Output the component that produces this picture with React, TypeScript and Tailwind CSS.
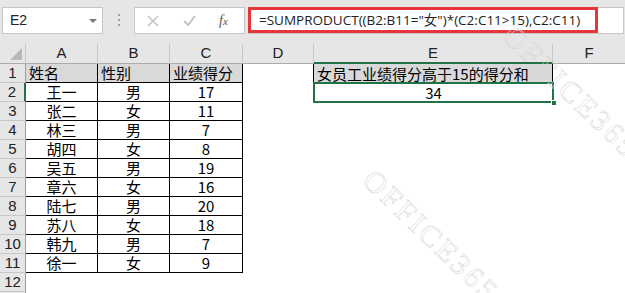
import React from "react";

const CJK = "font-['Noto_Sans_CJK_SC',_'Noto_Sans',_sans-serif]";

const data: [string, string, string][] = [
  ["王一", "男", "17"],
  ["张二", "女", "11"],
  ["林三", "男", "7"],
  ["胡四", "女", "8"],
  ["吴五", "男", "19"],
  ["章六", "女", "16"],
  ["陆七", "男", "20"],
  ["苏八", "女", "18"],
  ["韩九", "男", "7"],
  ["徐一", "女", "9"],
];

function RowHead({ n, active }: { n?: number; active?: boolean }) {
  return (
    <div
      className={`h-[19px] bg-[#e6e6e6] border-b border-b-[#c8c8c8] flex items-center justify-center text-[15px] leading-[18px] text-[#222] font-['Liberation_Sans',_sans-serif] ${
        active ? "border-r-2 border-r-[#217346]" : "border-r border-r-[#9e9e9e]"
      }`}
    >
      {n}
    </div>
  );
}

function ColHead({ label, active, last }: { label: string; active?: boolean; last?: boolean }) {
  return (
    <div
      className={`h-[20px] bg-[#e6e6e6] flex items-center justify-center text-[15px] text-[#222] font-['Liberation_Sans',_sans-serif] ${
        last ? "" : "border-r border-r-[#c8c8c8]"
      } ${active ? "border-b-2 border-b-[#217346]" : "border-b border-b-[#ababab]"}`}
    >
      {label}
    </div>
  );
}

function Cell({
  children,
  className = "",
}: {
  children?: React.ReactNode;
  className?: string;
}) {
  return (
    <div className={`h-[19px] flex items-center text-[15px] leading-[18px] text-black ${CJK} ${className}`}>
      {children}
    </div>
  );
}

const wm =
  "absolute origin-[0_50%] rotate-[44deg] text-[30px] leading-[30px] tracking-[3px] whitespace-nowrap text-transparent font-['Liberation_Serif',_serif] [-webkit-text-stroke:0.5px_#d4d4d4]";

export default function App() {
  return (
    <div className="relative w-[625px] h-[293px] overflow-hidden bg-white">
      {/* Top bar */}
      <div className="h-[44px] bg-[#e6e6e6] flex items-start pt-[7px] pl-[2px]">
        <div className="w-[101px] h-[27px] bg-white border border-[#c6c6c6] flex items-center justify-between pl-[7px] pr-[5px]">
          <span className="text-[14px] text-[#222] font-['Liberation_Sans',_sans-serif]">E2</span>
          <span className="w-0 h-0 border-l-[4px] border-r-[4px] border-t-[4px] border-l-transparent border-r-transparent border-t-[#7a7a7a]" />
        </div>
        <div className="ml-[15px] mt-[7px] flex flex-col gap-[3px]">
          <span className="w-[2px] h-[2px] bg-[#a0a0a0]" />
          <span className="w-[2px] h-[2px] bg-[#a0a0a0]" />
          <span className="w-[2px] h-[2px] bg-[#a0a0a0]" />
        </div>
        <div className="ml-[14px] w-[111px] h-[27px] bg-white border border-[#c6c6c6] flex items-center">
          <svg className="ml-[12px]" width="12" height="12" viewBox="0 0 12 12">
            <path d="M1 1 L11 11 M11 1 L1 11" stroke="#c4c4c4" strokeWidth="1.6" fill="none" />
          </svg>
          <svg className="ml-[24px]" width="13" height="11" viewBox="0 0 13 11">
            <path d="M1 6 L5 10 L12 1" stroke="#c4c4c4" strokeWidth="2" fill="none" />
          </svg>
          <span className="ml-[23px] text-[14px] italic text-[#555] font-['Liberation_Serif',_serif] leading-none">
            f<span className="text-[11px]">x</span>
          </span>
        </div>
        <div className="ml-[3px] w-[376px] h-[27px] bg-white border border-[#c6c6c6] border-l-0">
          <div className="w-[350px] h-[26px] -mt-px border-[3px] border-[#e8343b] flex items-center pl-[8px]">
            <span className="text-[13.5px] text-[#222] font-['Open_Sans',_'Noto_Sans_CJK_SC',_sans-serif] whitespace-nowrap">
              =SUMPRODUCT((B2:B11="女")*(C2:C11&gt;15),C2:C11)
            </span>
          </div>
        </div>
      </div>

      {/* Sheet grid */}
      <div className="grid grid-cols-[26px_72px_72px_73px_71px_239px_72px]">
        <div className="h-[20px] bg-[#e6e6e6] border-r border-r-[#c8c8c8] border-b border-b-[#ababab] flex items-end justify-end pr-[3px] pb-[3px]">
          <span className="w-0 h-0 border-l-[12px] border-l-transparent border-b-[12px] border-b-[#b8b8b8]" />
        </div>
        <ColHead label="A" />
        <ColHead label="B" />
        <ColHead label="C" />
        <ColHead label="D" />
        <ColHead label="E" active />
        <ColHead label="F" last />

        {/* Row 1 */}
        <RowHead n={1} />
        <Cell className="bg-[#d9d9d9] border-r border-b border-black pl-[3px]">姓名</Cell>
        <Cell className="bg-[#d9d9d9] border-r border-b border-black pl-[3px]">性别</Cell>
        <Cell className="bg-[#d9d9d9] border-r border-b border-black pl-[3px]">业绩得分</Cell>
        <Cell className="border-r border-black" />
        <Cell className="bg-[#d9d9d9] border-r border-black pl-[3px] whitespace-nowrap">女员工业绩得分高于15的得分和</Cell>
        <Cell />

        {data.map((r, i) => (
          <React.Fragment key={i}>
            <RowHead n={i + 2} active={i === 0} />
            <Cell className="border-r border-b border-black justify-center">{r[0]}</Cell>
            <Cell className="border-r border-b border-black justify-center">{r[1]}</Cell>
            <Cell className="border-r border-b border-black justify-center font-['Liberation_Sans',_sans-serif]">{r[2]}</Cell>
            <Cell />
            {i === 0 ? (
              <Cell className="relative justify-center font-['Liberation_Sans',_sans-serif]">
                <span className="absolute -left-px -top-px w-[241px] h-[21px] border-2 border-[#217346]" />
                <span className="absolute right-[-4px] bottom-[-4px] w-[6px] h-[6px] bg-[#217346] border border-white" />
                34
              </Cell>
            ) : (
              <Cell />
            )}
            <Cell />
          </React.Fragment>
        ))}

        <RowHead n={12} />
        <Cell />
        <Cell />
        <Cell />
        <Cell />
        <Cell />
        <Cell />
        <RowHead />
        <Cell />
        <Cell />
        <Cell />
        <Cell />
        <Cell />
        <Cell />
      </div>

      {/* Watermarks */}
      <div className="pointer-events-none absolute inset-0">
        <span className={`${wm} left-[508px] top-[16px]`}>OFFICE365</span>
        <span className={`${wm} left-[368px] top-[160px]`}>OFFICE365</span>
        <span className={`${wm} left-[-130px] top-[14px]`}>OFFICE365</span>
      </div>
    </div>
  );
}
